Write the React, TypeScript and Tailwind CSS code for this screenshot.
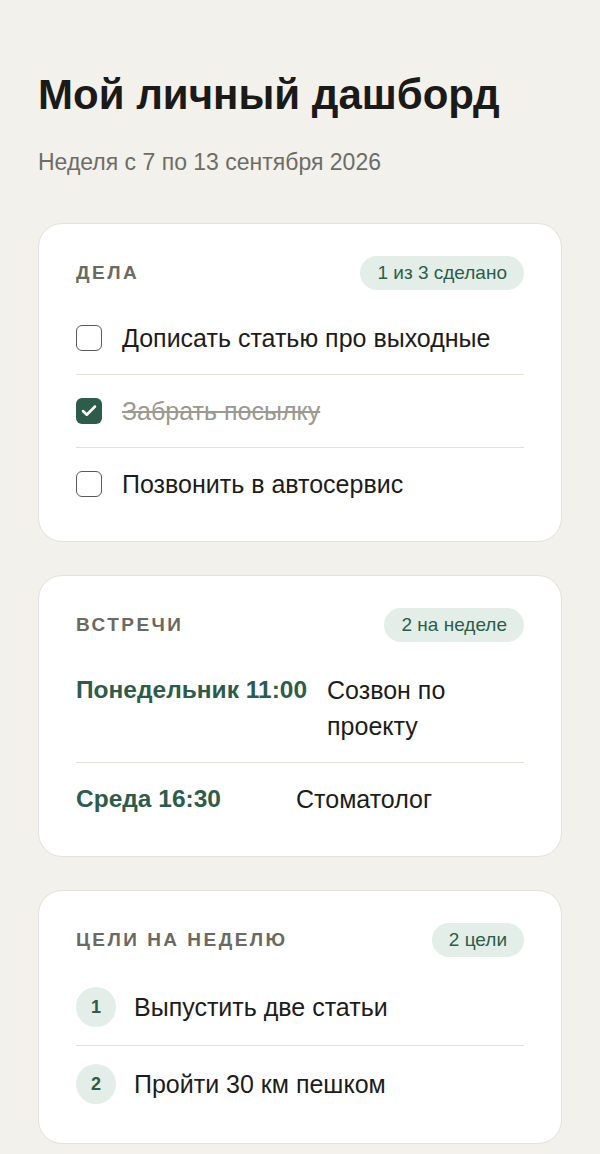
import { Check } from "lucide-react";

type Task = { id: number; title: string; done: boolean };
type Meeting = { when: string; what: string };

const tasks: Task[] = [
  { id: 1, title: "Дописать статью про выходные", done: false },
  { id: 2, title: "Забрать посылку", done: true },
  { id: 3, title: "Позвонить в автосервис", done: false },
];

const meetings: Meeting[] = [
  { when: "Понедельник 11:00", what: "Созвон по проекту" },
  { when: "Среда 16:30", what: "Стоматолог" },
];

const goals = ["Выпустить две статьи", "Пройти 30 км пешком"];

function Card({ title, badge, children }: { title: string; badge: string; children: React.ReactNode }) {
  return (
    <section className="rounded-[24px] border border-[#e4e1d8] bg-white px-[37px] pt-8 pb-[21px]">
      <div className="mb-3 flex items-center justify-between">
        <h2 className="text-[19px] font-bold uppercase tracking-[0.13em] text-[#6b6a60]">{title}</h2>
        <span className="rounded-full bg-[#e3eee8] px-[17px] py-[5px] text-[19px] leading-6 text-[#2d5c4b]">{badge}</span>
      </div>
      <div className="divide-y divide-[#e4e1d8]">{children}</div>
    </section>
  );
}

export default function App() {
  return (
    <div className="min-h-screen bg-[#f3f1ec] px-[38px] pt-[67px] pb-8 font-[Liberation_Sans,Arial,sans-serif] text-[#1c1c1a]">
      <h1 className="text-[42px] font-bold leading-[56px] text-[#1a1a18]">Мой личный дашборд</h1>
      <p className="mt-[25px] text-[23px] leading-7 text-[#6e6c66]">Неделя с 7 по 13 сентября 2026</p>

      <div className="mt-[47px] flex flex-col gap-[33px]">
        <Card title="Дела" badge="1 из 3 сделано">
          {tasks.map((t) => (
            <label key={t.id} className="flex items-center gap-5 py-[18px]">
              {t.done ? (
                <span className="grid h-[26px] w-[26px] shrink-0 place-items-center rounded-[6px] bg-[#2d5c4b] text-white">
                  <Check size={18} strokeWidth={3.4} />
                </span>
              ) : (
                <span className="h-[26px] w-[26px] shrink-0 rounded-[6px] border-[1.5px] border-[#5a5a56] bg-white" />
              )}
              <span className={t.done ? "text-[25px] leading-9 text-[#9b9990] line-through" : "text-[25px] leading-9"}>{t.title}</span>
            </label>
          ))}
        </Card>

        <Card title="Встречи" badge="2 на неделе">
          {meetings.map((m) => (
            <div key={m.when} className="flex gap-5 py-[18px]">
              <span className="min-w-[200px] shrink-0 text-[24.5px] font-bold leading-9 text-[#2d5c4b]">{m.when}</span>
              <span className="text-[25px] leading-9">{m.what}</span>
            </div>
          ))}
        </Card>

        <Card title="Цели на неделю" badge="2 цели">
          {goals.map((g, i) => (
            <div key={g} className="flex items-center gap-[18px] py-[18px]">
              <span className="grid h-10 w-10 shrink-0 place-items-center rounded-full bg-[#e3eee8] text-[18px] font-bold text-[#2d5c4b]">{i + 1}</span>
              <span className="text-[25px] leading-9">{g}</span>
            </div>
          ))}
        </Card>
      </div>
    </div>
  );
}
